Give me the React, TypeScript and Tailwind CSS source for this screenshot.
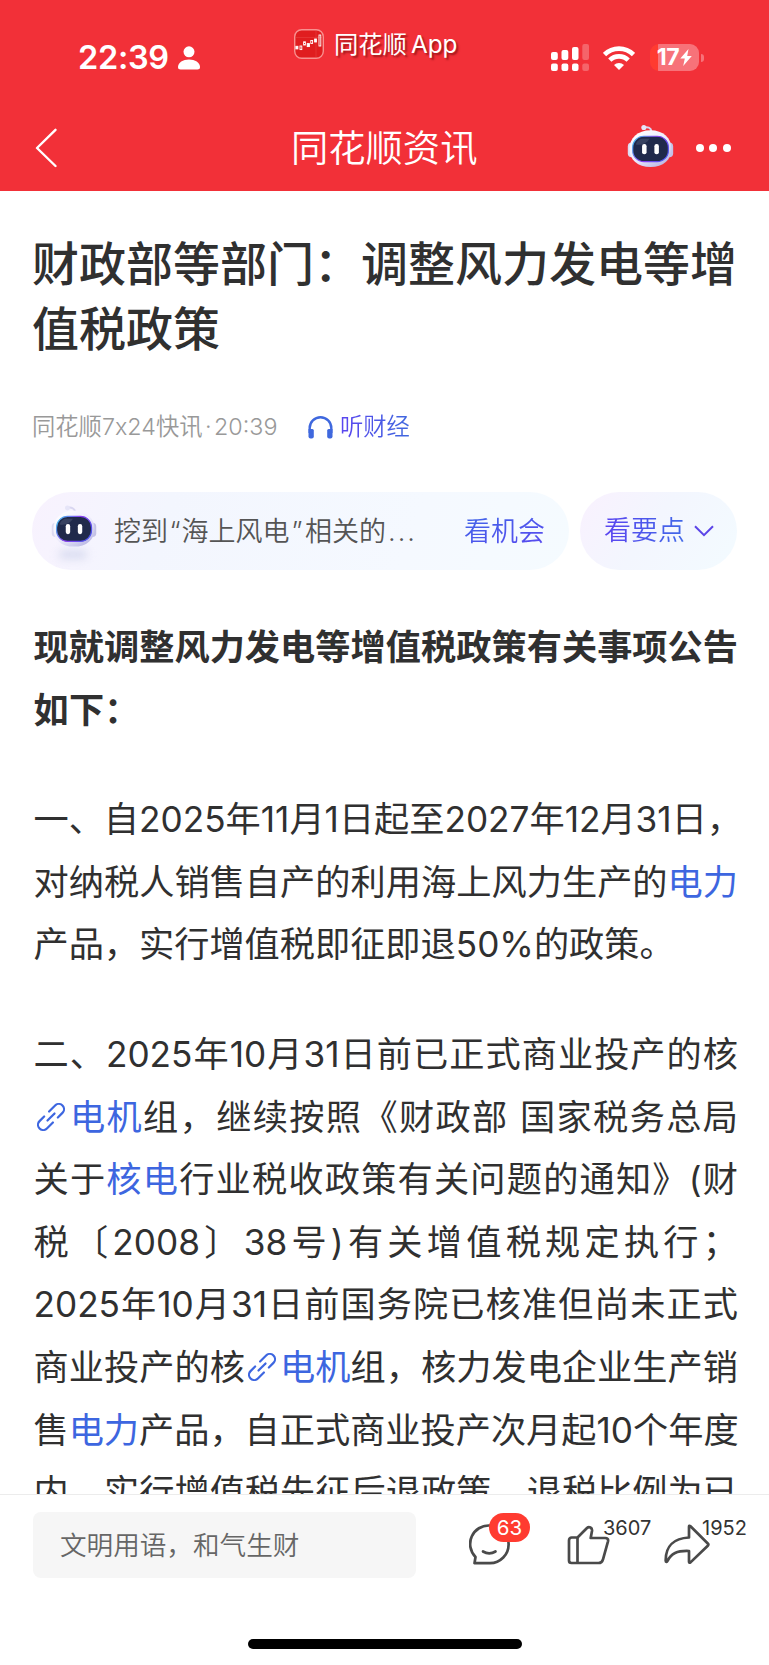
import React from 'react';
import clsx from 'clsx';

type Segment = string | { link: string; icon?: boolean };

interface Line {
  parts: Segment[];
  className?: string;
}

const article: { id: string; bold?: boolean; lines: Line[] }[] = [
  {
    id: 'lead',
    bold: true,
    lines: [
      { parts: ['现就调整风力发电等增值税政策有关事项公告'] },
      { parts: ['如下：'], className: 'w-[106px]' },
    ],
  },
  {
    id: 'first',
    lines: [
      { parts: ['一、自2025年11月1日起至2027年12月31日，'], className: 'w-[706px]' },
      { parts: ['对纳税人销售自产的利用海上风力生产的', { link: '电力' }] },
      { parts: ['产品，实行增值税即征即退50%的政策。'], className: 'w-[634px]' },
    ],
  },
  {
    id: 'second',
    lines: [
      { parts: ['二、2025年10月31日前已正式商业投产的核'] },
      { parts: [{ link: '电机', icon: true }, '组，继续按照《财政部 国家税务总局'] },
      { parts: ['关于', { link: '核电' }, '行业税收政策有关问题的通知》(财'] },
      { parts: ['税〔2008〕38号)有关增值税规定执行；'] },
      { parts: ['2025年10月31日前国务院已核准但尚未正式'] },
      { parts: ['商业投产的核', { link: '电机', icon: true }, '组，核力发电企业生产销'] },
      { parts: ['售', { link: '电力' }, '产品，自正式商业投产次月起10个年度'] },
      { parts: ['内，实行增值税先征后退政策，退税比例为已'] },
    ],
  },
];

const Robot: React.FC<{ className?: string; id: string }> = ({ className, id }) => (
  <svg viewBox="0 0 48 46" className={className} fill="none">
    <defs>
      <linearGradient id={`${id}-shell`} x1="10" y1="6" x2="36" y2="44" gradientUnits="userSpaceOnUse">
        <stop stopColor="#ffffff" />
        <stop offset="0.55" stopColor="#ecebfb" />
        <stop offset="1" stopColor="#b9b6e4" />
      </linearGradient>
      <linearGradient id={`${id}-rim`} x1="6" y1="14" x2="40" y2="36" gradientUnits="userSpaceOnUse">
        <stop stopColor="#43c5ee" />
        <stop offset="0.5" stopColor="#8a3df0" />
        <stop offset="1" stopColor="#4a55ee" />
      </linearGradient>
    </defs>
    <path d="M17 3.6c4-1 7.6 0 8 4" stroke="#d9d6f1" strokeWidth="2" strokeLinecap="round" />
    <circle cx="17.2" cy="3.6" r="2.6" fill="#e6e5f8" />
    <rect x="0.8" y="19" width="8" height="15" rx="4" fill="#dddbf2" />
    <rect x="39.2" y="19" width="8" height="15" rx="4" fill="#c4c2e6" />
    <path d="M24 6.5c13 0 21.5 8 21.5 19S37 44 24 44 2.5 36.5 2.5 25.5 11 6.5 24 6.5Z" fill={`url(#${id}-shell)`} />
    <rect x="5.8" y="12.5" width="36.5" height="26" rx="11.5" fill="#202a4b" stroke={`url(#${id}-rim)`} strokeWidth="1.2" />
    <path d="M9 21c1-4 4-6 8-6h6c-3 5-8 7-14 6Z" fill="#4a5370" opacity="0.6" />
    <rect x="15.4" y="20.5" width="4.6" height="10.5" rx="2.2" fill="#fff" />
    <rect x="28" y="20.5" width="4.6" height="10.5" rx="2.2" fill="#fff" />
  </svg>
);

const AppLogo = () => (
  <svg viewBox="0 0 30 30" className="h-[30px] w-[30px]" fill="none">
    <rect x="0.7" y="0.7" width="28.6" height="28.6" rx="7" fill="#e01d1f" stroke="#f8908f" strokeWidth="1.4" />
    <path d="M2 8.5h26M22 2v26" stroke="#e8413f" strokeWidth="0.6" />
    <g stroke="#fff" strokeWidth="0.9">
      <rect x="1.9" y="17.3" width="2" height="2.6" fill="#fff" />
      <rect x="6" y="17" width="1.8" height="3.6" />
      <rect x="9.6" y="12.8" width="1.8" height="3.2" />
      <rect x="13.2" y="14.6" width="2.2" height="3" fill="#fff" />
      <rect x="16.8" y="11.5" width="1.8" height="3" />
      <rect x="20.6" y="10" width="1.8" height="3" fill="#fff" />
      <rect x="25" y="6" width="1.8" height="11" />
    </g>
  </svg>
);

const Signal = () => (
  <svg viewBox="0 0 38 27" className="h-[27px] w-[38px]" fill="#fff">
    <rect x="0" y="8" width="6.8" height="8" rx="2" />
    <rect x="10.5" y="6" width="6.8" height="10" rx="2" />
    <rect x="21" y="3" width="6.5" height="13" rx="2" />
    <rect x="31.3" y="0" width="6.7" height="16" rx="2" opacity="0.25" />
    <rect x="0" y="19.5" width="6.8" height="7.5" rx="2" />
    <rect x="10.5" y="19.5" width="6.8" height="7.5" rx="2" />
    <rect x="21" y="19.5" width="6.5" height="7.5" rx="2" />
    <rect x="31.3" y="19.5" width="6.7" height="7.5" rx="2" opacity="0.25" />
  </svg>
);

const Wifi = () => (
  <svg viewBox="0 0 32 24" className="h-[24px] w-[32px]" fill="none" stroke="#fff" strokeWidth="4.6">
    <path d="M1.5 8.6a20.5 20.5 0 0 1 29 0" />
    <path d="M6.8 14.2a13 13 0 0 1 18.4 0" />
    <path d="M16 24l-5-5a7.2 7.2 0 0 1 10 0Z" fill="#fff" stroke="none" />
  </svg>
);

const LinkIcon = () => (
  <svg viewBox="0 0 28 28" className="mr-[4px] ml-[3px] inline-block h-[28px] w-[28px] align-[-1.5px]" fill="none" stroke="#3d66e0" strokeWidth="2.2" strokeLinecap="round">
    <g transform="translate(14 14) rotate(-45)">
      <path d="M-2.5 5.2H-11a5.2 5.2 0 0 1 0-10.4h6.5" />
      <path d="M2.5 -5.2H11a5.2 5.2 0 0 1 0 10.4H4.500" />
      <path d="M-5 0h10" />
    </g>
  </svg>
);

const Headphones = () => (
  <svg viewBox="0 0 25 23" className="h-[23px] w-[25px]" fill="none">
    <path d="M1.7 17v-5a10.8 10.8 0 0 1 21.6 0v5" stroke="#3f68de" strokeWidth="2.4" />
    <path d="M0.5 13h3.8a1.5 1.5 0 0 1 1.5 1.5v6a2 2 0 0 1-2 2H2.5a2 2 0 0 1-2-2Z" fill="#3f68de" />
    <path d="M24.5 13h-3.8a1.5 1.5 0 0 0-1.5 1.5v6a2 2 0 0 0 2 2h1.3a2 2 0 0 0 2-2Z" fill="#3f68de" />
  </svg>
);

const Header = () => (
  <header className="h-[191px] bg-[#f23038] text-white">
    <div className="flex h-[104px] items-start">
      <div className="flex w-[294px] items-center pt-[38px] pl-[78px]">
        <span className="w-[92px] text-[32.5px] leading-[40px] font-semibold tracking-[-0.3px] whitespace-nowrap">22:39</span>
        <svg viewBox="0 0 22 24" className="ml-[8px] h-[24px] w-[22px]" fill="#fff">
          <circle cx="11" cy="5.8" r="5.5" />
          <path d="M0 21c0-4.500 5-7.500 11-7.500S22 16.500 22 21c0 1.800-1 2.500-2.500 2.500h-17C1 23.500 0 22.800 0 21Z" />
        </svg>
      </div>
      <div className="flex w-[257px] items-center pt-[29px]">
        <AppLogo />
        <span className="ml-[10px] text-[24.3px] leading-[30px] whitespace-nowrap [text-shadow:2px_2px_2px_rgba(90,0,0,0.55)]">
          同花顺<span className="ml-[4px]">App</span>
        </span>
      </div>
      <div className="flex items-center pt-[44px]">
        <Signal />
        <span className="ml-[14px]"><Wifi /></span>
        <div className="ml-[15px] flex h-[27px] w-[49px] items-center justify-center rounded-[9px] bg-[linear-gradient(90deg,#ff3b30_0_8px,#f77279_8px)]">
          <span className="text-[23px] leading-[27px] font-bold tracking-[-0.5px]">17</span>
          <svg viewBox="0 0 12 17" className="ml-[1px] h-[17px] w-[12px]" fill="#fff">
            <path d="M8.5 0L0.3 9.5h4.5L3.2 17l8.6-10H7.2Z" />
          </svg>
        </div>
        <span className="ml-[1.5px] h-[8px] w-[3px] rounded-r-full bg-[#f77279]" />
      </div>
    </div>
    <div className="flex h-[88px] items-center pr-[38px] pl-[35px]">
      <svg viewBox="0 0 22 40" className="h-[40px] w-[22px]" fill="none" stroke="#fff" strokeWidth="2.4" strokeLinecap="round" strokeLinejoin="round">
        <path d="M20.5 1.8L2 20l18.5 18" />
      </svg>
      <h2 className="mt-[1px] ml-[234px] w-[336px] text-[37.3px] leading-[54px] font-[350]">同花顺资讯</h2>
      <Robot id="nav" className="-mt-[4px] h-[45px] w-[47px]" />
      <div className="ml-[22px] flex gap-[5.7px]">
        <span className="h-[8px] w-[8px] rounded-full bg-white" />
        <span className="h-[8px] w-[8px] rounded-full bg-white" />
        <span className="h-[8px] w-[8px] rounded-full bg-white" />
      </div>
    </div>
  </header>
);

const Article = () => (
  <div className="text-[35.2px] leading-[62.6px] text-[#303030]">
    {article.map((p) => (
      <p key={p.id} className={clsx('mb-[47px]', p.bold ? 'font-bold' : 'font-[380]')}>
        {p.lines.map((line, i) => (
          <span key={i} className={clsx('block h-[62.6px] whitespace-nowrap [text-align-last:justify]', line.className || 'w-[704.5px]')}>
            {line.parts.map((part, j) =>
              typeof part === 'string' ? (
                <React.Fragment key={j}>{part}</React.Fragment>
              ) : (
                <a key={j} href="#" className="text-[#3d66e0]">
                  {part.icon && <LinkIcon />}
                  {part.link}
                </a>
              )
            )}
          </span>
        ))}
      </p>
    ))}
  </div>
);

const BottomBar = () => (
  <footer className="h-[171px] border-t border-[#ececec] bg-white">
    <div className="flex h-[144px] items-start pt-[17px] pl-[33px]">
      <div className="flex h-[66px] w-[383px] items-center rounded-[8px] bg-[#f6f6f6] pt-[2px] pl-[27px] text-[26.6px] font-[350] text-[#666]">
        文明用语，和气生财
      </div>
      <div className="relative mt-[12px] ml-[53px] h-[41px] w-[41px]">
        <svg viewBox="0 0 41 41" className="h-[41px] w-[41px]" fill="none" stroke="#4a4a4a" strokeWidth="2.7" strokeLinecap="round" strokeLinejoin="round">
          <path d="M20.5 1.5A18.5 18.5 0 0 0 6.5 33l-1 6.2h15.5A18.800 18.800 0 1 0 20.5 1.5Z" />
          <path d="M14 27.5c4 2.4 8.5 2.4 12.5 0" />
        </svg>
        <span className="absolute top-[-11px] left-[20px] h-[29px] w-[41px] rounded-full bg-[#ff3b30] text-center text-[20.5px] leading-[29px] text-white">63</span>
      </div>
      <div className="relative mt-[13px] ml-[57px] h-[40px] w-[43px]">
        <svg viewBox="0 0 43 40" className="h-[40px] w-[43px]" fill="none" stroke="#4a4a4a" strokeWidth="2.7" strokeLinejoin="round">
          <path d="M10.5 12.5L20 3c2-2 5.500-.5 5 3l-1.300 7h14.500c2.200 0 3.300 1.300 2.800 3.300l-5 18c-.7 2.600-2 3.700-4.500 3.700h-27c-1.700 0-2.500-.8-2.500-2.500v-20c0-1.700 1-3 2.700-3Z" />
          <path d="M10.5 12.5V38" />
        </svg>
        <span className="absolute top-[-9px] left-[36px] text-[20px] leading-[24px] font-[380] text-[#333]">3607</span>
      </div>
      <div className="relative mt-[12px] ml-[54px] h-[40px] w-[46px]">
        <svg viewBox="0 0 46 40" className="h-[40px] w-[46px]" fill="none" stroke="#4a4a4a" strokeWidth="2.7" strokeLinejoin="round">
          <path d="M25 2.8c0-1 .6-1.300 1.500-.6l17.300 17.300c.8.800.8 1.400 0 2.200L26.500 38.400c-.9.700-1.500.4-1.500-.6V27C13 26.500 7 29.500 3.500 37c-.6 1.300-1.800 1-1.800-.3C1.500 22 10 14.200 25 13.500Z" />
        </svg>
        <span className="absolute top-[-8px] left-[38px] text-[20px] leading-[24px] font-[380] text-[#333]">1952</span>
      </div>
    </div>
    <div className="mx-auto h-[10px] w-[274px] rounded-full bg-black" />
  </footer>
);

const App: React.FC = () => {
  return (
    <div className="flex h-[1665px] w-[769px] flex-col overflow-hidden bg-white font-['Inter','Noto_Sans_CJK_SC',sans-serif]" lang="zh-CN">
      <Header />
      <main className="min-h-0 flex-1 overflow-hidden">
        <h1 className="mt-[40px] ml-[32px] w-[712px] text-[47px] leading-[65px] font-medium text-[#303030]">
          财政部等部门：调整风力发电等增<br />值税政策
        </h1>
        <div className="mt-[49px] flex h-[34px] items-center pl-[32px] text-[23.3px]">
          <span className="w-[276px] font-[350] whitespace-nowrap text-[#999]">
            同花顺7x24快讯<span className="mx-[2.5px]">·</span>20:39
          </span>
          <Headphones />
          <span className="ml-[7px] bg-[linear-gradient(90deg,#5b45f0,#3f68de)] bg-clip-text font-[350] text-transparent">听财经</span>
        </div>
        <div className="mt-[48px] flex gap-[11px] pl-[32px] text-[27px]">
          <div className="flex h-[78px] w-[537px] items-center rounded-full bg-[linear-gradient(110deg,#f8f2fe,#f3f6fe_25%,#f5f9ff_70%,#f5fbff)] pl-[19px]">
            <div className="relative">
              <Robot id="tip" className="-mt-[9px] h-[45px] w-[46px]" />
              <span className="absolute top-[37px] left-[8px] h-[9px] w-[28px] rounded-full bg-[#d9dcf0] blur-[4px]" />
            </div>
            <span className="mt-[2px] ml-[17px] w-[350px] font-[350] whitespace-nowrap text-[#555]">
              挖到<span className="mr-[1px] ml-[1.5px]">“</span>海上风电<span className="mr-[2.5px] ml-[2px]">”</span>相关的<span className="ml-[2px] tracking-[2px]">...</span>
            </span>
            <span className="mt-[2px] bg-[linear-gradient(160deg,#3f68e8,#5b45f0)] bg-clip-text font-[350] whitespace-nowrap text-transparent">看机会</span>
          </div>
          <div className="flex h-[78px] w-[157px] items-center rounded-full bg-[linear-gradient(125deg,#f9f1fe,#f3f6fe_45%,#f3fbff)] pl-[24px]">
            <span className="bg-[linear-gradient(90deg,#5b45f0,#3f68e8)] bg-clip-text font-[350] whitespace-nowrap text-transparent">看要点</span>
            <svg viewBox="0 0 20 12" className="ml-[9px] h-[12px] w-[20px]" fill="none" stroke="#5b45e8" strokeWidth="2">
              <path d="M1 1.2l9 9 9-9" />
            </svg>
          </div>
        </div>
        <div className="mt-[46px] pl-[33.5px]">
          <Article />
        </div>
      </main>
      <BottomBar />
    </div>
  );
};

export default App;
